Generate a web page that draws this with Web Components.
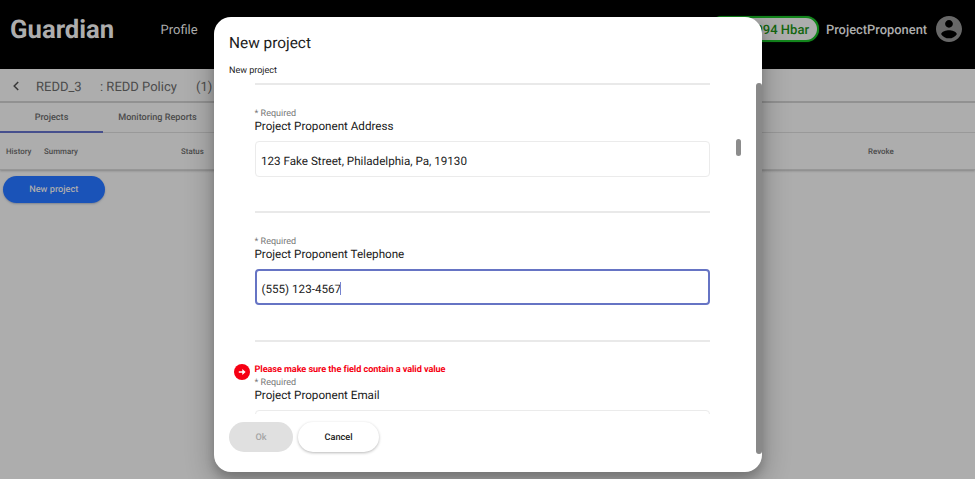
<!DOCTYPE html>
<html lang="en">
<head>
<meta charset="utf-8">
<title>Guardian</title>
<style>
html,body{margin:0;height:100%;overflow:hidden;background:#adadad}
body{font-family:Roboto,"Liberation Sans",sans-serif;text-rendering:geometricPrecision}
</style>
</head>
<body>
<guardian-app></guardian-app>
<script>
const define = (name, html, init) => customElements.define(name, class extends HTMLElement {
  connectedCallback() {
    if (this.shadowRoot) return;
    const t = document.createElement('template');
    t.innerHTML = '<style>*{box-sizing:border-box}</style>' + html;
    this.attachShadow({mode: 'open'}).append(t.content.cloneNode(true));
    if (init) init.call(this, this.shadowRoot);
  }
});

define('top-bar', `<style>
:host{display:flex;align-items:center;height:69px;background:#000;color:#adadad;padding:0 13px 11px 10px;box-sizing:border-box;white-space:nowrap}
.logo{font-size:25.7px;font-weight:700;width:150.5px;padding-top:1px}
.nav{font-size:13px;flex:1;padding-top:2px}
.bal{height:26px;width:110px;border:2px solid #13851c;border-radius:13px;background:#adadad;color:#14660f;font-size:13px;font-weight:500;display:flex;align-items:center;justify-content:flex-end;padding:2px 8px 0 0;margin-right:7px;box-shadow:0 0 1px #13851c}
.user{font-size:12.9px;font-weight:500;margin-right:9px;width:101px;padding-top:2px}
svg{display:block;width:26px;height:26px}
</style><span class="logo">Guardian</span><span class="nav">Profile</span><span class="bal">994 Hbar</span><span class="user">ProjectProponent</span>
<svg viewBox="2 2 20 20"><path fill="#686868" d="M12 2C6.48 2 2 6.48 2 12s4.48 10 10 10 10-4.48 10-10S17.52 2 12 2zm0 3c1.66 0 3 1.34 3 3s-1.34 3-3 3-3-1.34-3-3 1.34-3 3-3zm0 14.2c-2.5 0-4.71-1.28-6-3.22.03-1.99 4-3.08 6-3.08 1.99 0 5.97 1.09 6 3.08-1.29 1.94-3.5 3.22-6 3.22z"/></svg>`);

define('crumb-bar', `<style>
:host{display:flex;align-items:center;height:34px;border-bottom:2px solid #919191;color:#4b4b4b;font-size:13px;padding:2px 0 0 13px;box-sizing:border-box;white-space:pre}
svg{width:6px;height:10px;margin-right:17px}
span{padding-top:2px}
.a{width:64px}.b{width:96px}
</style><svg viewBox="0 0 6 10"><path d="M5.2 1L1.2 5l4 4" fill="none" stroke="#383838" stroke-width="1.5"/></svg><span class="a">REDD_3</span><span class="b">: REDD Policy</span><span>(1)</span>`);

define('tab-bar', `<style>
:host{display:flex;height:30px;border-bottom:1px solid #9b9b9b;box-sizing:border-box;font-size:9.1px;font-weight:500;color:#4b4b4b;white-space:nowrap}
span{display:flex;align-items:center;justify-content:center;height:30px;width:103px;padding-top:0}
.on{border-bottom:2px solid #464f8d;padding:2px 0 0}
.two{width:109px}
</style><span class="on">Projects</span><span class="two">Monitoring Reports</span>`);

define('grid-head', `<style>
:host{display:flex;align-items:center;height:37px;border-bottom:1px solid #969696;box-shadow:0 1px 2px #858585;box-sizing:border-box;font-size:7.9px;font-weight:500;color:#4a4a4a;padding:1px 0 0 6px;white-space:nowrap}
</style><span style="width:38px">History</span><span style="width:137px">Summary</span><span style="width:687px">Status</span><span>Revoke</span>`);

define('pill-button', `<style>
:host{display:flex;align-items:center;justify-content:center;box-sizing:border-box;border-radius:20px;font-weight:500;font-size:9.2px;white-space:nowrap}
:host([kind=primary]){width:101.5px;height:27px;background:#1a53b8;color:#adadad;margin:6px 0 0 3px;box-shadow:0 1px 2px #7d8491}
:host([kind=off]){width:64px;height:30px;background:#e0e0e0;color:#a5a5a5;padding-top:1px}
:host([kind=plain]){width:81px;height:30px;background:#fff;color:#202020;padding-top:1px;box-shadow:0 1px 3px rgba(0,0,0,.28)}
</style><slot></slot>`);

define('form-field', `<style>
:host{display:block;width:455px;height:128.3px;border-top:2px solid #e9e9e9;box-sizing:border-box;padding-top:22.8px;position:relative;flex:none}
.err{display:none;color:#f60013;font-size:9.15px;font-weight:700;line-height:13px;margin-top:-.8px;letter-spacing:-.07px;white-space:nowrap}
:host([error]) .err{display:block}
svg{display:none;position:absolute;left:-21px;top:22.5px;width:16px;height:16px}
:host([error]) svg{display:block}
.req{font-size:9px;line-height:12px;color:#777;height:12px}
.label{font-size:11.65px;line-height:13px;height:15px;color:#202020;white-space:nowrap}
.box{height:36.5px;margin-top:5.9px;border:1.5px solid #ebebeb;border-radius:4px;display:flex;align-items:center;font-size:11.65px;color:#222;padding:4px 0 0 5.5px;width:455px}
:host([focused]) .box{border:2px solid #6674c4;padding:3px 0 0 5px}
:host([error]) .box{margin-top:6.5px}
i{display:none;width:1px;height:13px;margin-left:-1px;background:#7683cf}
:host([focused]) i{display:block}
</style><svg viewBox="0 0 16 16"><circle cx="8" cy="8" r="8" fill="#f60013"/><path d="M4.8 7.2h3.5V5l3.3 3-3.3 3V8.8H4.8z" fill="#fff"/></svg>
<div class="err">Please make sure the field contain a valid value</div><div class="req">* Required</div><div class="label"></div><div class="box"><span></span><i></i></div>`, function (r) {
  r.querySelector('.label').textContent = this.getAttribute('label');
  r.querySelector('span').textContent = this.getAttribute('value') || '';
});

define('project-dialog', `<style>
:host{display:flex;flex-direction:column;position:absolute;left:213.5px;top:16.5px;width:548px;height:455.5px;border-radius:17px;background:#fff;box-sizing:border-box;padding:16px 0 0 15.5px;box-shadow:0 6px 10px rgba(0,0,0,.18),0 8px 26px 5px rgba(0,0,0,.2)}
h1{margin:0;font-size:15.4px;line-height:20px;font-weight:400;color:#1c1c1c}
h2{margin:12px 0 0;font-size:9px;line-height:13px;font-weight:400;color:#1c1c1c}
.scroll{height:331px;margin-top:5.5px;padding-left:25.5px;overflow:hidden;display:flex;flex-direction:column;flex:none}
.actions{display:flex;gap:5px;margin-top:7.5px}
.thumb{position:absolute;left:522.5px;top:122.5px;width:5px;height:17px;border-radius:3px;background:#8c8c8c}
.rail{position:absolute;left:542.5px;top:66px;width:5.5px;height:371px;border-radius:3px;background:#898989}
</style><h1>New project</h1><h2>New project</h2>
<div class="scroll"><form-field label="Project Proponent Address" value="123 Fake Street, Philadelphia, Pa, 19130"></form-field><form-field focused label="Project Proponent Telephone" value="(555) 123-4567"></form-field><form-field error label="Project Proponent Email"></form-field></div>
<div class="actions"><pill-button kind="off">Ok</pill-button><pill-button kind="plain">Cancel</pill-button></div>
<div class="thumb"></div><div class="rail"></div>`);

define('guardian-app', `<style>
:host{display:block;position:relative;width:975px;height:479px;overflow:hidden;background:#adadad}
</style><top-bar></top-bar><crumb-bar></crumb-bar><tab-bar></tab-bar><grid-head></grid-head><pill-button kind="primary">New project</pill-button><project-dialog></project-dialog>`);
</script>
</body>
</html>
